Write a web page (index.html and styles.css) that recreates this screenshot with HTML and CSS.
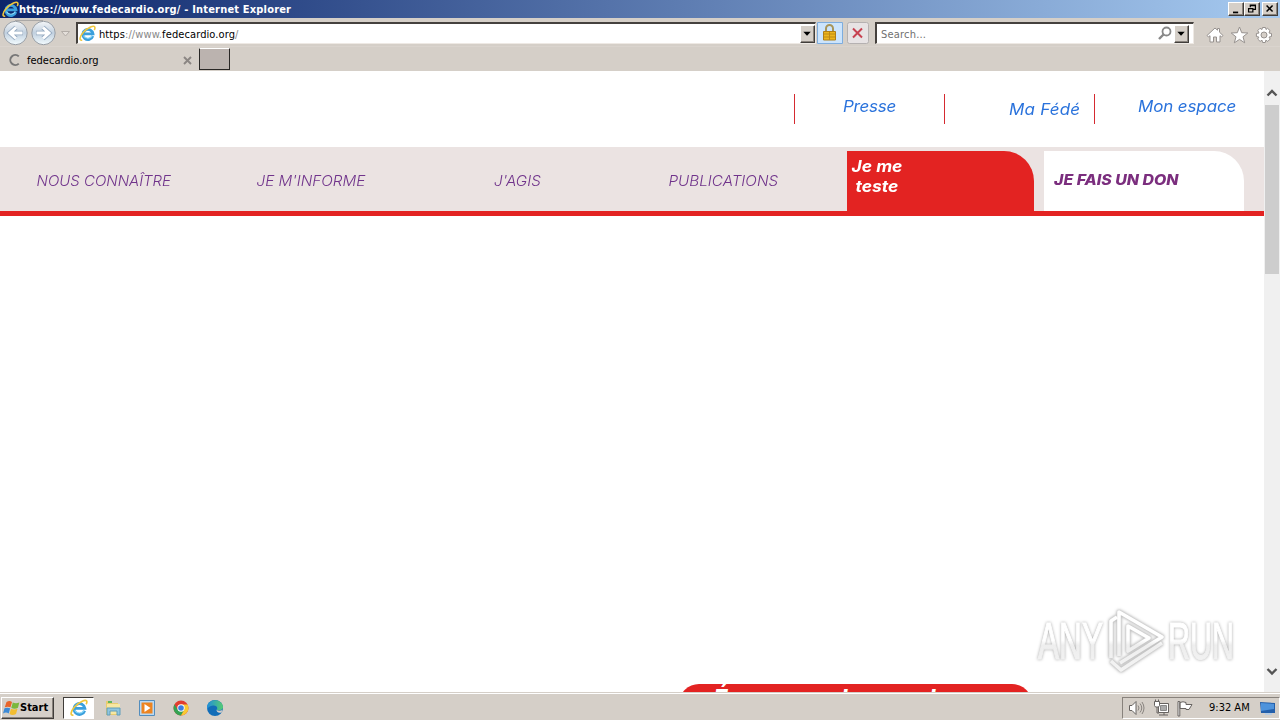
FILE: index.html
```html
<!DOCTYPE html>
<html lang="fr">
<head>
<meta charset="utf-8">
<title>https://www.fedecardio.org/ - Internet Explorer</title>
<link rel="stylesheet" href="styles.css">
</head>
<body>
<svg class="defs" width="0" height="0">
  <symbol id="ie" viewBox="0 0 16 16">
    <path d="M13 10.400A4.800 4.800 0 1 1 13.200 8.300H5" fill="none" stroke="#3a9fdc" stroke-width="2.600"/>
    <path d="M12.600 9.900A4.800 4.800 0 0 1 4.200 10" fill="none" stroke="#8ad8f8" stroke-width="1"/>
    <path d="M3 14.300C-.3 15 .7 10.700 4.200 6.900 8 2.600 14.600-.6 15 2.400c.1.800-.2 1.600-.7 2.300" fill="none" stroke="#efc63c" stroke-width="1.500"/>
  </symbol>
</svg>
<div class="screen">
  <header class="titlebar">
    <svg class="title-icon" width="17" height="17"><use href="#ie"/></svg>
    <span class="title-text">https://www.fedecardio.org/ - Internet Explorer</span>
    <div class="win-buttons">
      <svg class="bevel win-btn" viewBox="0 0 15 14"><path d="M4 11h6" stroke="#000" stroke-width="2"/></svg>
      <svg class="bevel win-btn" viewBox="0 0 15 14"><path d="M5.500 5V2.500h6v5H9M5 3h7M3.500 6.500h5v4h-5zM3 6.500h6" fill="none" stroke="#000" stroke-width="1.400"/></svg>
      <svg class="bevel win-btn win-close" viewBox="0 0 15 14"><path d="M3.500 3l7 7m0-7l-7 7" stroke="#000" stroke-width="1.800"/></svg>
    </div>
  </header>

  <div class="toolbar">
    <svg class="nav-arrows" width="74" height="28" viewBox="0 0 74 28">
      <defs><linearGradient id="orb" x2="0" y2="1"><stop stop-color="#f4f6f8"/><stop offset=".5" stop-color="#c1d0df"/><stop offset="1" stop-color="#f3fcff"/></linearGradient></defs>
      <path d="M15 2.500h28" stroke="#aaa8a6"/>
      <circle cx="15.500" cy="15" r="11.700" fill="url(#orb)" stroke="#999fa6"/>
      <circle cx="43.500" cy="15" r="11.700" fill="url(#orb)" stroke="#999fa6"/>
      <path d="M23 15H10m6-5.500L10 15l6 5.500M36 15h13M43 9.500l6 5.500-6 5.500" fill="none" stroke="#93a8bf" stroke-width="4.600"/>
      <path d="M22.500 15H10m6-5.500L10 15l6 5.500M36.500 15H49M43 9.500l6 5.500-6 5.500" fill="none" stroke="#fff" stroke-width="3"/>
      <path d="M61.500 13.500h8L65.500 18z" fill="#e4dfda" stroke="#b3ada8"/>
    </svg>
    <div class="field address">
      <svg class="address-icon" width="17" height="17"><use href="#ie"/></svg>
      <span class="address-text">https<i>://www.</i>fedecardio.org<i>/</i></span>
      <svg class="bevel drop" viewBox="0 0 14 17"><path d="M2.500 6h8l-4 4.500z"/></svg>
    </div>
    <svg class="lock" width="26" height="22" viewBox="0 0 26 22"><path d="M.5.5h25v21H.5z" fill="#cce4fc" stroke="#7eadde"/><path d="M9 10V6.500a3.500 3.500 0 0 1 7 0V10" fill="none" stroke="#a8955a" stroke-width="2"/><path d="M6.500 9.500h12v8.500h-12z" fill="#edb51b" stroke="#af7e16"/><path d="M7 12h11M7 15h11M12.500 10v8" stroke="#bd8915"/></svg>
    <svg class="stop" width="22" height="22" viewBox="0 0 22 22"><rect x=".5" y=".5" width="21" height="21" rx="2" fill="#e7e3e4" stroke="#b5b1b1"/><path d="M6 6.500l9 9m0-9l-9 9" stroke="#c74150" stroke-width="2"/></svg>
    <div class="field search">
      <span class="search-text">Search...</span>
      <svg width="15" height="15" viewBox="0 0 15 15"><circle cx="8.500" cy="5.500" r="4" fill="none" stroke="#888" stroke-width="1.800"/><path d="M5.500 8.500L1 13" stroke="#888" stroke-width="2.400"/></svg>
      <svg class="bevel drop" viewBox="0 0 14 17"><path d="M2.500 6h8l-4 4.500z"/></svg>
    </div>
    <svg class="tools" width="70" height="20" viewBox="0 0 70 20" fill="#fff" stroke="#96918e">
      <path d="M2 10.500L10 3l2.500 2.200V3.500h2v3.700L18 10.500 16.500 12 15 10.700V17h-3.500v-5h-3v5H5v-6.300L3.500 12z"/>
      <path d="M34.500 2l2.200 5.700 6.100.3-4.800 3.800 1.700 6-5.200-3.400-5.200 3.400 1.700-6L26.200 8l6.100-.3z"/>
      <path d="M57.500 2.500h3l.5 2 1.500-1.200 2.500 2.200L64 8l2.500.5v3l-2.500.6 1.200 1.900-2.400 2.400-2-1.200-.5 2.300h-2.700l-.6-2.300-1.900 1.200-2.400-2.400 1.200-1.900-2.500-.6v-3L54 8l-1.200-2.500L55 3.300 57 4.500z"/><circle cx="59" cy="10" r="3" fill="#d5cfc8"/>
    </svg>
  </div>

  <div class="tabs">
    <div class="tab">
      <svg width="14" height="14" viewBox="0 0 14 14"><path d="M10.800 3.400A5 5 0 1 0 10.800 10.600" fill="none" stroke="#777" stroke-width="2"/></svg>
      <span class="tab-text">fedecardio.org</span>
      <svg width="9" height="9" viewBox="0 0 9 9"><path d="M1 1l7 7m0-7L1 8" stroke="#8b8683" stroke-width="1.900"/></svg>
    </div>
    <div class="new-tab"></div>
  </div>

  <div class="viewport">
    <main class="page">
      <div class="top-links">
        <a class="top-link presse"><span>Presse</span></a>
        <a class="top-link fede"><span>Ma Fédé</span></a>
        <a class="top-link espace"><span>Mon espace</span></a>
      </div>
      <nav class="main-nav">
        <a class="nav-item"><span class="t-connaitre">NOUS CONNAÎTRE</span></a>
        <a class="nav-item"><span class="t-informe">JE M'INFORME</span></a>
        <a class="nav-item"><span class="t-agis">J'AGIS</span></a>
        <a class="nav-item"><span class="t-publications">PUBLICATIONS</span></a>
        <a class="test-tab"><span>Je me<br>teste</span></a>
        <a class="don-tab"><span>JE FAIS UN DON</span></a>
      </nav>
      <div class="hero"><div class="pill"><span class="letter e">É</span><span class="letter d1">l</span><span class="letter d2">l</span></div></div>
    </main>
    <aside class="scrollbar">
      <svg width="16" height="34" viewBox="0 0 16 34"><path d="M3.500 24.500L8 20l4.500 4.500" fill="none" stroke="#555" stroke-width="2.400"/></svg>
      <div class="thumb"></div>
      <svg class="scroll-down" width="16" height="34" viewBox="0 0 16 34"><path d="M3.500 11L8 15.500l4.500-4.500" fill="none" stroke="#555" stroke-width="2.400"/></svg>
    </aside>
  </div>

  <footer class="taskbar">
    <div class="bevel start">
      <svg width="17" height="18" viewBox="0 0 17 18"><path d="M3.500 3q3-2 5.500 0L7.500 8.300Q4.700 7 1.800 8.300z" fill="#e8652b"/><path d="M9.800 3.500q3 1.500 6.500 0L15 8.800Q11.500 10.500 8.300 8.800z" fill="#7bb83d"/><path d="M1.500 9.300Q4 8 7.200 9.300l-1.500 5.200Q3 12.700 0 14.500z" fill="#3c8ad6"/><path d="M8 9.800q3 1.500 6.500 0L13 15q-3.500 2-6.500 0z" fill="#f2bd30"/></svg>
      <span>Start</span>
    </div>
    <div class="task-active"><svg width="18" height="18"><use href="#ie"/></svg></div>
    <svg class="task-icon" width="18" height="18" viewBox="0 0 18 18"><path d="M2 2h5l1 2h6v12H2z" fill="#e8cc70"/><path d="M3 5h13v10H3z" fill="#f7e7a2"/><path d="M4 3h4" stroke="#62b65b" stroke-width="2"/><path d="M3 16V9h13v7h-3v-4H6v4z" fill="#8fc5df" stroke="#609db9"/></svg>
    <svg class="task-icon" width="18" height="18" viewBox="0 0 18 18"><path d="M1.500 1.500h15v15h-15z" fill="#b9d9f3" stroke="#538dbd"/><path d="M3.500 3.500h11v11h-11z" fill="#ed8420"/><path d="M6.500 5v8l6-4z" fill="#fff"/></svg>
    <svg class="task-icon" width="18" height="18" viewBox="0 0 18 18"><circle cx="9" cy="9" r="7.500" fill="#e23d30"/><path d="M2.500 5.300A7.500 7.500 0 0 0 9 16.500l3.500-6.100H5.500z" fill="#33a353"/><path d="M9 5.500h6.600A7.500 7.500 0 0 1 9 16.500l3.400-6z" fill="#f9ca32"/><circle cx="9" cy="9" r="3.700" fill="#fff"/><circle cx="9" cy="9" r="2.800" fill="#3d7de0"/></svg>
    <svg class="task-icon" width="18" height="18" viewBox="0 0 18 18"><defs><linearGradient id="edge"><stop stop-color="#218edb"/><stop offset="1" stop-color="#55cc72"/></linearGradient></defs><circle cx="9" cy="9" r="8" fill="#126db8"/><path d="M1 8C2-1.500 16.500-.5 17 8c.2 3-3.500 4-6.500 2.800 2-2.500-.5-4.800-3.500-4.300-3 .3-5 2-6 4z" fill="url(#edge)"/><path d="M10.500 10.800c1.500 1.400 3.800 1.200 6 .3l-1 2.300c-2.500.7-5 .2-5-2.600z" fill="#d5cfc8"/></svg>
    <div class="tray">
      <svg class="tray-icons" width="70" height="20" viewBox="0 0 70 20" fill="#fff" stroke="#676360">
        <path d="M2.500 7.500H5l4-4v13l-4-4H2.500z"/><path d="M11 7.500q2 2.500 0 5M13 5.500q3.500 4.500 0 9M15 4q4 6 0 12" fill="none" stroke="#88837f"/>
        <path d="M31.500 5.500h10v9h-10z"/><path d="M33.500 7.500h6v5h-6z" fill="#aaa" stroke="#888"/><path d="M32 17h9M37 14.500V17M30 9v6h2" fill="none"/><path d="M27.500 3.500h5v4l-1 1.500h-3l-1-1.500zM28.500 1.500v2M31.500 1.500v2"/>
        <path d="M51 3.500h1.800V18H51zM53 4.500q3-1.500 6 0v2h6l-3 5h-3v-1h-6z"/>
      </svg>
      <span class="clock">9:32 AM</span>
      <svg width="16" height="16" viewBox="0 0 16 16"><path d="M0 2l15 1v10H1z" fill="#245faa"/><path d="M1 3l13 1v5L1 11z" fill="#4e93dc"/><path d="M5 14h7" stroke="#b7cbe1" stroke-width="2"/></svg>
    </div>
  </footer>

  <svg class="watermark" width="210" height="70" viewBox="0 0 210 70">
    <defs><linearGradient id="fade" gradientUnits="userSpaceOnUse" x1="0" y1="5" x2="0" y2="66"><stop offset=".48" stop-color="#fff"/><stop offset=".56" stop-color="#eee"/><stop offset="1" stop-color="#f4f4f4"/></linearGradient></defs>
    <g fill="url(#fade)" stroke="url(#fade)" stroke-width="1.200" class="mark-text">
      <text x="8" y="53" textLength="65" lengthAdjust="spacingAndGlyphs">ANY</text>
      <text x="138" y="53" textLength="66" lengthAdjust="spacingAndGlyphs">RUN</text>
    </g>
    <g class="mark-shape" fill="none" stroke="url(#fade)" stroke-width="3.600" stroke-linejoin="round">
      <path d="M81 52V15l6-4"/><path d="M89 50V6l43 25-42 26"/><path d="M98 20l21 12-21 13z"/><path d="M81 55l10 9 41-27"/>
    </g>
  </svg>
</div>
</body>
</html>
```
FILE: styles.css
```css
* { box-sizing: border-box; }
body { margin: 0; }
svg { display: block; flex: none; }
.defs { position: absolute; }
.screen {
  position: relative;
  display: flex;
  flex-direction: column;
  width: 1280px;
  height: 720px;
  overflow: hidden;
  background: #d5cfc8;
  font: 11px "DejaVu Sans Condensed", "DejaVu Sans", sans-serif;
  color: #000;
}
.bevel {
  background: #d5cfc8;
  border: 1px solid;
  border-color: #fff #403d3a #403d3a #fff;
  box-shadow: inset -1px -1px #88827c;
}
.titlebar {
  display: flex;
  align-items: center;
  height: 18px;
  padding: 0 2px;
  background: linear-gradient(90deg, #0b246a, #a6caf0);
  color: #fff;
}
.title-text { font-weight: bold; white-space: nowrap; letter-spacing: .18px; }
.win-buttons { display: flex; margin-left: auto; }
.win-btn { width: 16px; height: 14px; }
.win-close { margin-left: 2px; }

.toolbar { display: flex; height: 28px; }
.nav-arrows { margin-right: 2px; }
.field {
  display: flex;
  align-items: center;
  height: 22px;
  margin-top: 4px;
  background: #fff;
  border: 2px solid;
  border-color: #45413e #eee9e4 #eee9e4 #45413e;
  border-width: 2px 1px 1px 2px;
}
.address { width: 740px; padding-left: 1px; }
.address-icon { margin-right: 3px; }
.address-text { white-space: nowrap; padding-top: 1px; letter-spacing: .1px; }
.address-text i { font-style: normal; color: #888; }
.drop { width: 15px; height: 18px; margin-left: auto; }
.lock { margin: 4px 0 0 1px; }
.stop { margin: 4px 0 0 4px; }
.search { width: 319px; margin-left: 6px; padding: 0 4px 0 4px; }
.search-text { margin-right: auto; padding-top: 1px; color: #707070; letter-spacing: .2px; }
.search .drop { margin-left: 1px; }
.tools { margin: 7px 0 0 11px; }

.tabs { display: flex; height: 25px; border-top: 1px solid #dad4ce; }
.tab { display: flex; align-items: center; width: 199px; padding: 2px 7px 0 8px; }
.tab-text { margin: 0 auto 0 5px; }
.new-tab {
  width: 31px;
  height: 22px;
  margin-top: 1px;
  background: #bbb3af;
  border: 1px solid;
  border-color: #fff #292725 #292725 #292725;
}

.viewport { display: flex; height: 621px; background: #fff; }
.page {
  display: flex;
  flex-direction: column;
  width: 1264px;
  font-family: Inter, "Open Sans", sans-serif;
  font-style: italic;
}
.top-links { display: flex; height: 76px; padding: 23px 0 0 794px; }
.top-link {
  width: 150px;
  height: 30px;
  border-left: 1px solid #d52a30;
  font-size: 16px;
  line-height: 24px;
  color: #2b73dc;
  white-space: nowrap;
}
.top-link span { display: inline-block; transform: scaleX(1.06); transform-origin: left; }
.presse { padding-left: 48px; letter-spacing: -.2px; }
.fede { padding: 3px 0 0 64px; letter-spacing: .2px; }
.espace { padding-left: 43px; letter-spacing: -.1px; }
.main-nav {
  display: flex;
  height: 69px;
  padding-top: 4px;
  background: #ebe3e2;
  border-bottom: 5px solid #e32322;
}
.nav-item {
  display: flex;
  align-items: center;
  justify-content: center;
  width: 207px;
  height: 58px;
  font-size: 14px;
  color: #70338b;
  white-space: nowrap;
}
.nav-item:nth-child(4) { width: 226px; padding-right: 21px; }
.nav-item span { font-weight: 350; transform: scaleX(1.09); }
.nav-item .t-connaitre { letter-spacing: 0; transform: scaleX(1.07); }
.test-tab {
  width: 187px;
  height: 60px;
  padding: 5px 0 0 5px;
  border-radius: 0 30px 0 0;
  background: #e32322;
  color: #fff;
  font-size: 16px;
  font-weight: 700;
  line-height: 20px;
}
.test-tab span { display: block; width: 50px; text-align: center; white-space: nowrap; transform: scaleX(1.09); }
.don-tab {
  width: 200px;
  height: 60px;
  margin-left: 10px;
  padding-left: 10px;
  border-radius: 0 30px 0 0;
  background: #fff;
  color: #7b2e7e;
  font-size: 14px;
  font-weight: 800;
  line-height: 58px;
  white-space: nowrap;
}
.don-tab span { display: inline-block; transform: scaleX(1.135); transform-origin: left; }
.hero { display: flex; flex: 1; align-items: flex-end; padding-left: 679px; overflow: hidden; }
.pill {
  display: flex;
  width: 353px;
  height: 40px;
  margin-bottom: -32px;
  border-radius: 20px;
  background: #e32322;
  color: #fff;
  font-size: 24px;
  font-weight: 700;
  line-height: 29px;
}
.letter { width: 88px; }
.e { width: 162px; padding-left: 34px; }
.scrollbar { display: flex; flex-direction: column; width: 16px; background: #f0f0f0; }
.thumb { width: 14px; height: 169px; margin: 0 1px; background: #cdcdcd; }
.scroll-down { margin-top: auto; }

.taskbar {
  display: flex;
  align-items: center;
  height: 28px;
  padding-top: 2px;
  border-top: 1px solid #d5cfc8;
  box-shadow: inset 0 1px #fff;
}
.start {
  display: flex;
  align-items: center;
  width: 53px;
  height: 22px;
  margin-left: 1px;
  padding-left: 1px;
  font-weight: bold;
}
.task-active {
  display: flex;
  align-items: center;
  justify-content: center;
  width: 31px;
  height: 22px;
  margin: 0 0 0 9px;
  background: #fff;
  border: 1px solid;
  border-color: #403d3a #fff #fff #403d3a;
}
.task-icon { margin-left: 10px; }
.task-icon + .task-icon { margin-left: 16px; }
.tray {
  display: flex;
  align-items: center;
  width: 158px;
  height: 22px;
  margin-left: auto;
  border: 1px solid;
  border-color: #88827c #fff #fff #88827c;
  padding-left: 4px;
}
.tray-icons { margin-right: 12px; }
.clock { width: 51px; white-space: nowrap; }

.watermark { position: absolute; left: 1030px; top: 606px; overflow: visible; filter: drop-shadow(0 0 1.5px #aaa); }
.mark-text { font: 51px "Liberation Sans", sans-serif; }
.mark-shape { filter: drop-shadow(0 0 1px #ccc); }
```
